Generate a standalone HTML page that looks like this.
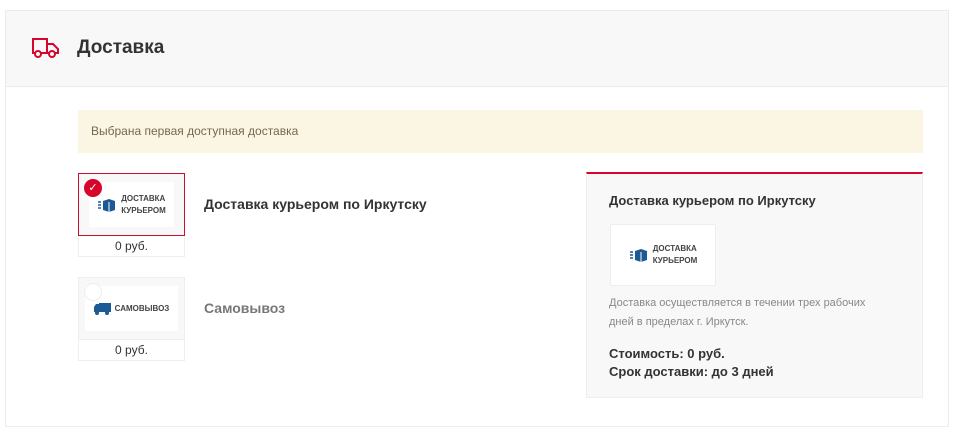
<!DOCTYPE html><html><head><meta charset="utf-8"><style>
body{margin:0;background:#fff;font-family:"Liberation Sans","DejaVu Sans",sans-serif;width:958px;height:434px;overflow:hidden;position:relative}
.a{position:absolute}
.card{left:5px;top:10px;width:944px;height:417px;border:1px solid #ececec;box-sizing:border-box}
.hdr{left:6px;top:11px;width:942px;height:75px;background:#f8f8f8;border-bottom:1px solid #ececec}
.logo{background:#fff;display:flex;align-items:center;justify-content:center;font-weight:bold;font-size:8px;color:#444;line-height:12px}
.price{font-size:12px;color:#333;text-align:center;border:1px solid #eee;border-top:none;background:#fff;box-sizing:border-box}
</style></head><body>
<div class="a card"></div>
<div class="a hdr"></div>
<svg class="a" style="left:31px;top:37px" width="29" height="22" viewBox="0 0 29 22" fill="none" stroke="#d7042c" stroke-width="2"><path d="M2 2h14v14H2z M16 7h6l5 5v4h-11"/><circle cx="7" cy="17" r="3" fill="#f8f8f8"/><circle cx="21" cy="17" r="3" fill="#f8f8f8"/></svg>
<div class="a" style="left:77px;top:37px;font-size:19px;font-weight:bold;color:#333">Доставка</div>
<div class="a" style="left:78px;top:110px;width:845px;height:43px;background:#fbf6e3;font-size:12px;color:#77684a;line-height:43px;padding-left:13px;box-sizing:border-box">Выбрана первая доступная доставка</div>

<div class="a" style="left:78px;top:173px;width:107px;height:63px;border:1px solid #c8102e;box-sizing:border-box;background:#f8f8f8;padding:8px 10px"><div class="logo" style="height:45px"><svg width="20" height="14" viewBox="0 0 20 14" style="margin-right:4px"><path d="M1 4h3M1 7h3M1 10h3" stroke="#1c5a96" stroke-width="1.5"/><path d="M6 3l6-2 6 2v9l-6 2-6-2z" fill="#1c5a96"/><path d="M12 4v10" stroke="#fff"/></svg>ДОСТАВКА<br>КУРЬЕРОМ</div></div>
<div class="a" style="left:84px;top:179px;width:18px;height:18px;border-radius:50%;background:#d7042c;color:#fff;font-size:11px;text-align:center;line-height:18px">✓</div>
<div class="a price" style="left:78px;top:236px;width:107px;height:21px;line-height:20px">0 руб.</div>
<div class="a" style="left:204px;top:196px;font-size:14px;font-weight:bold;color:#333">Доставка курьером по Иркутску</div>

<div class="a" style="left:78px;top:277px;width:107px;height:63px;border:1px solid #eee;box-sizing:border-box;background:#f8f8f8;padding:8px 6px"><div class="logo" style="height:45px"><svg width="18" height="13" viewBox="0 0 18 13" style="margin-right:3px"><path d="M5 1h12v9H5z M0 5l2-3h3v8H0z" fill="#1c5a96"/><circle cx="3" cy="11" r="2" fill="#1c5a96"/><circle cx="13" cy="11" r="2" fill="#1c5a96"/></svg>САМОВЫВОЗ</div></div>
<div class="a" style="left:84px;top:283px;width:16px;height:16px;border-radius:50%;background:#fff;border:1px solid #eee"></div>
<div class="a price" style="left:78px;top:340px;width:107px;height:21px;line-height:20px">0 руб.</div>
<div class="a" style="left:204px;top:300px;font-size:14px;font-weight:bold;color:#777">Самовывоз</div>

<div class="a" style="left:586px;top:172px;width:337px;height:226px;background:#f8f8f8;border-top:2px solid #d7042c;border-left:1px solid #eee;border-right:1px solid #eee;border-bottom:1px solid #eee;box-sizing:border-box"></div>
<div class="a" style="left:609px;top:193px;font-size:13px;font-weight:bold;color:#333">Доставка курьером по Иркутску</div>
<div class="a" style="left:610px;top:224px;width:106px;height:62px;background:#fff;border:1px solid #eee;box-sizing:border-box"><div class="logo" style="height:60px"><svg width="20" height="14" viewBox="0 0 20 14" style="margin-right:4px"><path d="M1 4h3M1 7h3M1 10h3" stroke="#1c5a96" stroke-width="1.5"/><path d="M6 3l6-2 6 2v9l-6 2-6-2z" fill="#1c5a96"/><path d="M12 4v10" stroke="#fff"/></svg>ДОСТАВКА<br>КУРЬЕРОМ</div></div>
<div class="a" style="left:609px;top:294px;width:268px;font-size:11px;color:#888;line-height:19px">Доставка осуществляется в течении трех рабочих дней в пределах г. Иркутск.</div>
<div class="a" style="left:609px;top:345px;font-size:13px;font-weight:bold;color:#333;line-height:18px">Стоимость: 0 руб.<br>Срок доставки: до 3 дней</div>
</body></html>
